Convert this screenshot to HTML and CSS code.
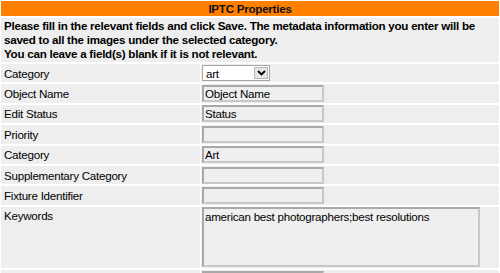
FILE: index.html
```html
<!DOCTYPE html>
<html lang="en">
<head>
    <meta charset="UTF-8">
    <title>IPTC Properties</title>
    <link rel="stylesheet" href="styles.css">
</head>
<body>
    <table class="iptc">
        <tr><td colspan="2" class="head">IPTC Properties</td></tr>
        <tr>
            <td colspan="2" class="note">Please fill in the relevant fields and click Save. The metadata information you enter will be saved to all the images under the selected category.<br>You can leave a field(s) blank if it is not relevant.</td>
        </tr>
        <tr>
            <td class="label">Category</td>
            <td class="field">
                <div class="select"><span class="sel-text">art</span><span class="sel-btn"><svg width="9" height="6" viewBox="0 0 9 6"><path d="M1 1 L4.5 4.5 L8 1" fill="none" stroke="#000" stroke-width="1.8"/></svg></span></div>
            </td>
        </tr>
        <tr><td class="label">Object Name</td><td class="field"><input type="text" value="Object Name"></td></tr>
        <tr><td class="label">Edit Status</td><td class="field"><input type="text" value="Status"></td></tr>
        <tr><td class="label">Priority</td><td class="field"><input type="text" value=""></td></tr>
        <tr><td class="label">Category</td><td class="field"><input type="text" value="Art"></td></tr>
        <tr><td class="label">Supplementary Category</td><td class="field"><input type="text" value=""></td></tr>
        <tr><td class="label">Fixture Identifier</td><td class="field"><input type="text" value=""></td></tr>
        <tr>
            <td class="label top">Keywords</td>
            <td class="field"><textarea>american best photographers;best resolutions</textarea></td>
        </tr>
        <tr><td class="label"></td><td class="field"><input type="text" value=""></td></tr>
    </table>
</body>
</html>
```

FILE: styles.css
```css
body { margin: 0; background: #fff; font-family: "Liberation Sans", Arial, sans-serif; font-size: 11.6px; letter-spacing: -0.25px; color: #000; }
.iptc { width: 100%; border-collapse: separate; border-spacing: 1px 2px; margin-top: -1px; }
.iptc td { padding: 0; background: #eeeeee; }
.iptc td.head { background: #ff8000; height: 15px; text-align: center; font-weight: bold; line-height: 15px; color: #111; }
.iptc td.note { font-weight: bold; line-height: 14px; padding: 1px 3px 1px 3px; }
.iptc td.label { width: 193px; padding: 0 3px; height: 18.4px; }
.iptc td.top { vertical-align: top; padding-top: 2px; }
.iptc td.field { padding: 0.7px 0 0.7px 1px; }
input, textarea { font-family: "Liberation Sans", Arial, sans-serif; font-size: 11.6px; letter-spacing: -0.25px; color: #000; background: #efefef; border: 2px solid #a9a9a9; border-right-color: #c8c8c8; border-bottom-color: #c8c8c8; box-sizing: border-box; margin: 0; padding: 0 1px; display: block; }
input { width: 122px; height: 17px; }
textarea { width: 278px; height: 60px; resize: none; padding: 1px; overflow: hidden; }
.select { width: 66px; height: 14px; border: 1px solid #a5a5a5; background: #fff; display: flex; align-items: center; box-sizing: content-box; }
.sel-text { flex: 1; padding-left: 3px; }
.sel-btn { width: 14px; height: 12px; margin-right: 1px; background: #e6e6e6; border: 1px solid #b8b8b8; box-sizing: border-box; display: flex; align-items: center; justify-content: center; }
```
